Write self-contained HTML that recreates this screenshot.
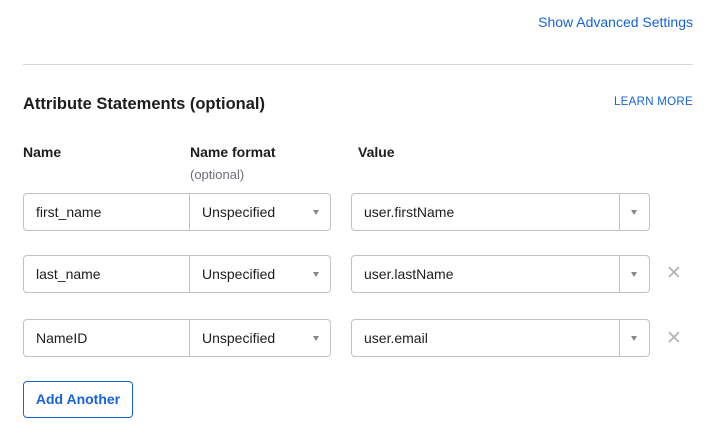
<!DOCTYPE html>
<html><head><meta charset="utf-8"><style>
body{margin:0;width:715px;height:446px;background:#fff;font-family:"Liberation Sans",sans-serif;color:#1d1d21;position:relative;overflow:hidden}
.a{position:absolute;white-space:nowrap}
.link{color:#1662dd;font-size:14px}
.box{position:absolute;border:1px solid #c1c1c8;box-sizing:border-box;height:38px;font-size:14px;line-height:36px;padding-left:12px;color:#1d1d21}
.arr{position:absolute;width:0;height:0;border-left:3.5px solid transparent;border-right:3.5px solid transparent;border-top:5px solid #888}
.x{position:absolute;font-size:19px;color:#b4b4ba;line-height:20px}
</style></head><body>
<div class="a link" style="right:22px;top:14px">Show Advanced Settings</div>
<div class="a" style="left:23px;top:64px;width:670px;height:1px;background:#d7d7dc"></div>
<div class="a" style="left:23px;top:95px;font-size:16.5px;font-weight:bold">Attribute Statements (optional)</div>
<div class="a link" style="right:22px;top:96px;font-size:11.5px;letter-spacing:.3px">LEARN MORE</div>
<div class="a" style="left:23px;top:144px;font-size:14px;font-weight:bold">Name</div>
<div class="a" style="left:190px;top:144px;font-size:14px;font-weight:bold">Name format</div>
<div class="a" style="left:190px;top:167px;font-size:13px;color:#6e6e78">(optional)</div>
<div class="a" style="left:358px;top:144px;font-size:14px;font-weight:bold">Value</div>

<div class="box" style="left:23px;top:193px;width:167px;border-radius:4px 0 0 4px">first_name</div>
<div class="box" style="left:189px;top:193px;width:142px;border-radius:0 4px 4px 0">Unspecified</div>
<div class="arr" style="left:313px;top:210px"></div>
<div class="box" style="left:351px;top:193px;width:299px;border-radius:4px">user.firstName</div>
<div class="a" style="left:619px;top:194px;width:1px;height:36px;background:#c1c1c8"></div>
<div class="arr" style="left:631px;top:210px"></div>

<div class="box" style="left:23px;top:255px;width:167px;border-radius:4px 0 0 4px">last_name</div>
<div class="box" style="left:189px;top:255px;width:142px;border-radius:0 4px 4px 0">Unspecified</div>
<div class="arr" style="left:313px;top:272px"></div>
<div class="box" style="left:351px;top:255px;width:299px;border-radius:4px">user.lastName</div>
<div class="a" style="left:619px;top:256px;width:1px;height:36px;background:#c1c1c8"></div>
<div class="arr" style="left:631px;top:272px"></div>
<div class="x" style="left:666px;top:264px">✕</div>

<div class="box" style="left:23px;top:319px;width:167px;border-radius:4px 0 0 4px">NameID</div>
<div class="box" style="left:189px;top:319px;width:142px;border-radius:0 4px 4px 0">Unspecified</div>
<div class="arr" style="left:313px;top:336px"></div>
<div class="box" style="left:351px;top:319px;width:299px;border-radius:4px">user.email</div>
<div class="a" style="left:619px;top:320px;width:1px;height:36px;background:#c1c1c8"></div>
<div class="arr" style="left:631px;top:336px"></div>
<div class="x" style="left:666px;top:329px">✕</div>

<div class="a" style="left:23px;top:381px;width:110px;height:37px;box-sizing:border-box;border:1px solid #1662dd;border-radius:4px;color:#1662dd;font-weight:bold;font-size:14px;text-align:center;line-height:35px">Add Another</div>
</body></html>
